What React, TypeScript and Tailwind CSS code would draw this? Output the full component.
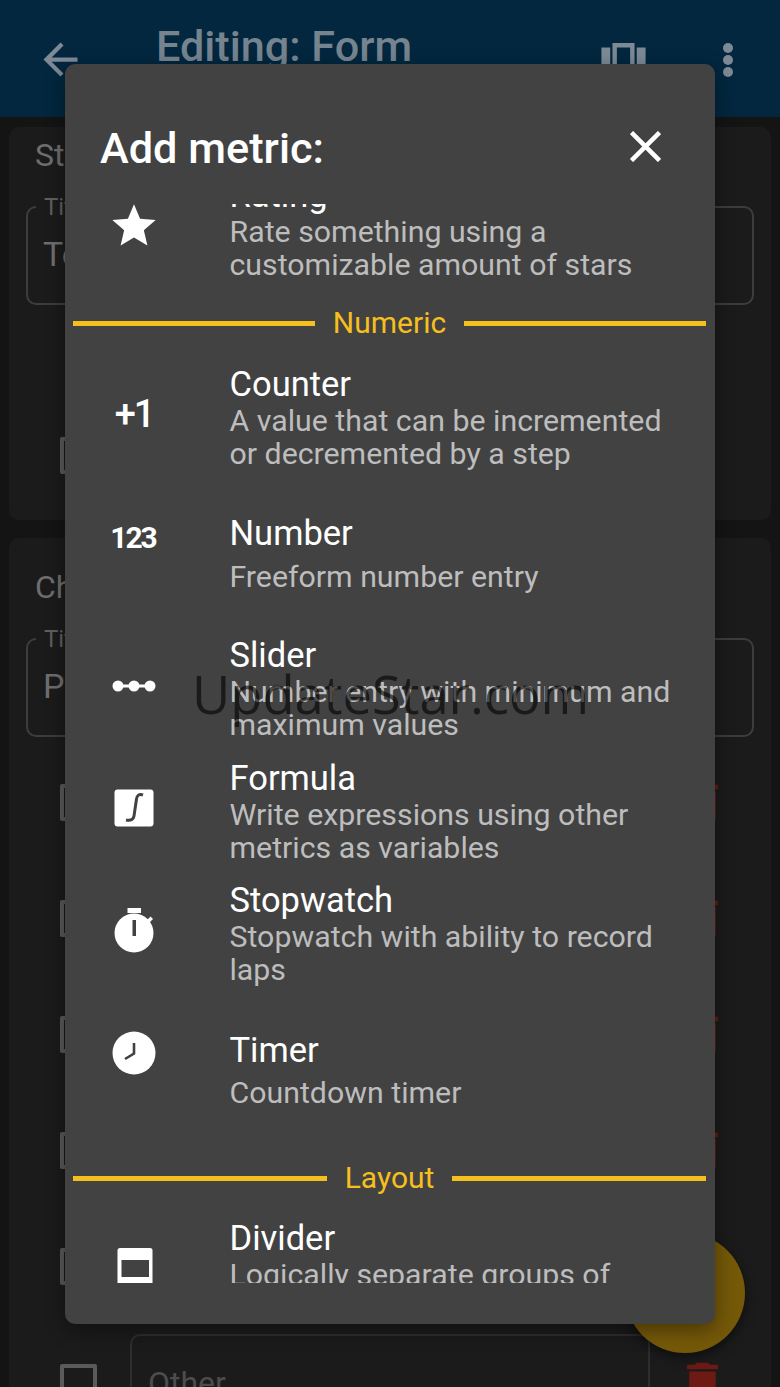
import React from 'react';

type Metric = {
  title: string;
  desc: string;
  icon: React.ReactNode;
  rowClass: string;
  iconClass: string;
  textClass: string;
  descClass?: string;
};

const IconBox: React.FC<{ children: React.ReactNode }> = ({ children }) => (
  <svg width="48" height="48" viewBox="0 0 48 48" fill="none">
    {children}
  </svg>
);

const StarIcon = () => (
  <svg width="52" height="52" viewBox="0 0 24 24" fill="#fff" className="-ml-[2px] -mt-[2px]">
    <path d="M12 17.27L18.18 21l-1.64-7.03L22 9.24l-7.19-.61L12 2 9.19 8.63 2 9.24l5.46 4.73L5.82 21z" />
  </svg>
);

const GlyphIcon: React.FC<{ text: string; className: string }> = ({ text, className }) => (
  <div className={`flex h-[48px] w-[48px] items-center justify-center text-white ${className}`}>{text}</div>
);

const SliderIcon = () => (
  <IconBox>
    <line x1="8" y1="24" x2="40" y2="24" stroke="#fff" strokeWidth="3" />
    <circle cx="8" cy="24" r="5.5" fill="#fff" />
    <circle cx="24" cy="24" r="5.5" fill="#fff" />
    <circle cx="40" cy="24" r="5.5" fill="#fff" />
  </IconBox>
);

const FormulaIcon = () => (
  <IconBox>
    <rect x="4.5" y="5.5" width="39" height="37" rx="3" fill="#fff" />
    <path d="M33 11c-4-1.5-6 .5-6.5 4l-2.5 17c-.5 3.5-3 5-8 4" stroke="#424242" strokeWidth="3" />
  </IconBox>
);

const StopwatchIcon = () => (
  <IconBox>
    <rect x="17.5" y="2" width="13.5" height="5" fill="#fff" />
    <circle cx="24" cy="27" r="19.5" fill="#fff" />
    <path d="M37 14l3.5-3.5 2.5 2.5-3.5 3.5z" fill="#fff" />
    <rect x="22.5" y="14" width="3.5" height="16" fill="#424242" />
  </IconBox>
);

const TimerIcon = () => (
  <IconBox>
    <circle cx="24" cy="24" r="21.5" fill="#fff" />
    <path d="M24 14v10.5l-9 5.5" stroke="#424242" strokeWidth="2.6" />
  </IconBox>
);

const DividerIcon = () => (
  <IconBox>
    <path d="M7.5 9.5a2.5 2.5 0 0 1 2.5-2.5h30a2.5 2.5 0 0 1 2.5 2.5V42h-35z" fill="#fff" />
    <rect x="11.5" y="19" width="27.5" height="17" fill="#424242" />
  </IconBox>
);

const ratingRow: Metric = {
  title: 'Rating',
  desc: 'Rate something using a customizable amount of stars',
  icon: <StarIcon />,
  rowClass: 'h-[161px]',
  iconClass: 'mt-[57px]',
  textClass: 'pt-[30px]',
};

const numericRows: Metric[] = [
  {
    title: 'Counter',
    desc: 'A value that can be incremented or decremented by a step',
    icon: <GlyphIcon text="+1" className="text-[38px] font-medium tracking-[-2px]" />,
    rowClass: 'h-[148px]',
    iconClass: 'mt-[50px]',
    textClass: 'pt-[24px]',
  },
  {
    title: 'Number',
    desc: 'Freeform number entry',
    icon: <GlyphIcon text="123" className="-ml-[1px] text-[30px] font-bold tracking-[-2px]" />,
    rowClass: 'h-[122px]',
    iconClass: 'mt-[25px]',
    textClass: 'pt-[25px]',
    descClass: 'mt-[7px]',
  },
  {
    title: 'Slider',
    desc: 'Number entry with minimum and maximum values',
    icon: <SliderIcon />,
    rowClass: 'h-[123px]',
    iconClass: 'mt-[52px]',
    textClass: 'pt-[25px]',
  },
  {
    title: 'Formula',
    desc: 'Write expressions using other metrics as variables',
    icon: <FormulaIcon />,
    rowClass: 'h-[122px]',
    iconClass: 'mt-[51px]',
    textClass: 'pt-[25px]',
  },
  {
    title: 'Stopwatch',
    desc: 'Stopwatch with ability to record laps',
    icon: <StopwatchIcon />,
    rowClass: 'h-[150px]',
    iconClass: 'mt-[51px]',
    textClass: 'pt-[25px]',
  },
  {
    title: 'Timer',
    desc: 'Countdown timer',
    icon: <TimerIcon />,
    rowClass: 'h-[156px]',
    iconClass: 'mt-[24px]',
    textClass: 'pt-[25px]',
    descClass: 'mt-[6px]',
  },
];

const dividerRow: Metric = {
  title: 'Divider',
  desc: 'Logically separate groups of metrics',
  icon: <DividerIcon />,
  rowClass: 'h-[160px]',
  iconClass: 'mt-[46px]',
  textClass: 'pt-[23px]',
};

const MetricRow: React.FC<{ metric: Metric }> = ({ metric }) => (
  <div className={`flex ${metric.rowClass}`}>
    <div className="w-[165px] shrink-0 pl-[45px]">
      <div className={metric.iconClass}>{metric.icon}</div>
    </div>
    <div className={`-ml-[0.5px] w-[461px] ${metric.textClass}`}>
      <div className="text-[34.5px] leading-[40px] text-white">{metric.title}</div>
      <div className={`text-[30.3px] leading-[33px] text-[#bdbdbd] ${metric.descClass ?? ''}`}>{metric.desc}</div>
    </div>
  </div>
);

const SectionHeader: React.FC<{ label: string }> = ({ label }) => (
  <div className="flex h-[34px] items-center gap-[18px] pl-[8px] pr-[9px]">
    <div className="h-[5px] flex-1 bg-[#f5bf1e]" />
    <div className="text-[30px] leading-[34px] text-[#f5bf1e]">{label}</div>
    <div className="h-[5px] flex-1 bg-[#f5bf1e]" />
  </div>
);

const OutlinedField: React.FC<{ label: string; value: string }> = ({ label, value }) => (
  <div className="relative mx-[17px] h-[99px] rounded-[10px] border-2 border-[#3d3d3d]">
    <span className="absolute -top-[19px] left-[8px] bg-[#1b1b1b] px-[8px] text-[24px] text-[#5f5f5f]">{label}</span>
    <div className="pl-[15px] pt-[24px] text-[34px] leading-[44px] text-[#6e6e6e]">{value}</div>
  </div>
);

const ChoiceRow: React.FC<{ value: string }> = ({ value }) => (
  <div className="flex h-[98px] shrink-0 items-center">
    <div className="ml-[51px] h-[37px] w-[37px] shrink-0 rounded-[2px] border-[4px] border-[#5a5a5a]" />
    <div className="ml-[33px] flex h-[98px] w-[520px] shrink-0 items-center rounded-[10px] border-2 border-[#2e2e2e] pl-[16px] text-[32px] text-[#4c4c4c]">
      {value}
    </div>
    <svg width="53" height="53" viewBox="0 0 24 24" fill="#6e1a14" className="ml-[26px] shrink-0">
      <path d="M6 19c0 1.1.9 2 2 2h8c1.1 0 2-.9 2-2V7H6v12zM19 4h-3.5l-1-1h-5l-1 1H5v2h14V4z" />
    </svg>
  </div>
);

const CardClose = () => (
  <svg width="34" height="34" viewBox="0 0 34 34" stroke="#6a6a6a" strokeWidth="3" className="absolute right-[54px] top-[12px]">
    <path d="M4 4l26 26M30 4L4 30" />
  </svg>
);

const App: React.FC = () => {
  return (
    <div className="relative h-[1387px] w-[780px] overflow-hidden bg-[#141414] font-['Roboto',sans-serif]">
      <header className="flex h-[117px] items-start bg-[#02273f]">
        <svg width="51" height="51" viewBox="0 0 24 24" fill="#7d8a95" className="ml-[35px] mt-[34px] shrink-0">
          <path d="M20 11H7.83l5.59-5.59L12 4l-8 8 8 8 1.41-1.41L7.83 13H20v-2z" />
        </svg>
        <h1 className="ml-[70px] mt-[23px] w-[444px] text-[43.2px] font-medium leading-[48px] text-[#76848f]">Editing: Form</h1>
        <svg width="53" height="53" viewBox="0 0 24 24" fill="#7d8a95" className="-ml-[3px] mt-[32px] shrink-0">
          <path d="M2 7h4v10H2V7zm5 12h10V5H7v14zM9 7h6v10H9V7zm9 0h4v10h-4V7z" />
        </svg>
        <svg width="12" height="36" viewBox="0 0 12 36" fill="#7d8a95" className="ml-[72px] mt-[42px] shrink-0">
          <circle cx="6" cy="6" r="5" />
          <circle cx="6" cy="18" r="5" />
          <circle cx="6" cy="30" r="5" />
        </svg>
      </header>

      <main className="flex flex-col gap-[18px] px-[9px] pt-[10px]">
        <section className="relative h-[393px] rounded-[10px] bg-[#1b1b1b]">
          <CardClose />
          <div className="pl-[26px] pt-[7px] text-[32px] leading-[42px] text-[#6e6e6e]">Status</div>
          <div className="mt-[30px]">
            <OutlinedField label="Title" value="Text" />
          </div>
          <div className="ml-[51px] mt-[132px] h-[37px] w-[37px] rounded-[2px] border-[4px] border-[#5a5a5a]" />
        </section>

        <section className="relative h-[900px] rounded-[10px] bg-[#1b1b1b]">
          <CardClose />
          <div className="pl-[26px] pt-[28px] text-[32px] leading-[42px] text-[#6e6e6e]">Choices</div>
          <div className="mt-[30px]">
            <OutlinedField label="Title" value="Pick one" />
          </div>
          <div className="mt-[16px] flex flex-col gap-[18.2px]">
            <ChoiceRow value="Option 1" />
            <ChoiceRow value="Option 2" />
            <ChoiceRow value="Option 3" />
            <ChoiceRow value="Option 4" />
            <ChoiceRow value="Option 5" />
            <ChoiceRow value="Other" />
          </div>
        </section>
      </main>

      <div className="absolute left-[625px] top-[1233px] h-[120px] w-[120px] rounded-full bg-[#755909] shadow-[0_4px_12px_rgba(0,0,0,0.5)]" />

      <div className="absolute left-[65px] top-[64px] flex h-[1260px] w-[650px] flex-col rounded-[10px] bg-[#424242] shadow-[0_6px_20px_rgba(0,0,0,0.4)]">
        <div className="flex h-[140px] shrink-0 items-start justify-between pl-[35px] pr-[54px]">
          <h2 className="mt-[59px] text-[43.3px] font-medium leading-[52px] text-white">Add metric:</h2>
          <svg width="31" height="31" viewBox="0 0 31 31" stroke="#fff" strokeWidth="4.5" className="mt-[67px]">
            <path d="M1.5 1.5l28 28M29.5 1.5l-28 28" />
          </svg>
        </div>
        <div className="h-[1079px] shrink-0 overflow-hidden">
          <div className="-mt-[59px]">
            <MetricRow metric={ratingRow} />
            <SectionHeader label="Numeric" />
            {numericRows.map((metric) => (
              <MetricRow key={metric.title} metric={metric} />
            ))}
            <SectionHeader label="Layout" />
            <MetricRow metric={dividerRow} />
          </div>
        </div>
      </div>

      <div className="absolute left-[192px] top-[658px] font-['Open_Sans',sans-serif] text-[52.5px] leading-[72px] text-black/60">
        UpdateStar.com
      </div>
    </div>
  );
};

export default App;
